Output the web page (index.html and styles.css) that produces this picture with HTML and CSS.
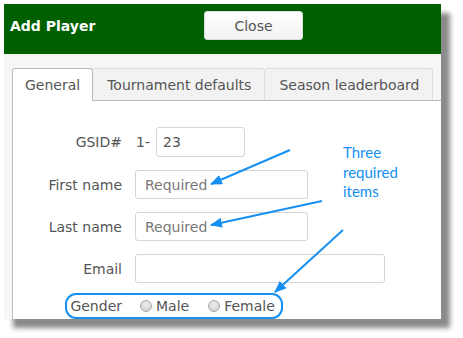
FILE: index.html
```html
<!DOCTYPE html>
<html lang="en">

    <head>
        <meta name="viewport" content="width=device-width, initial-scale=1">
        <title>Add Player</title>
        <link rel="stylesheet" href="styles.css">
    </head>

    <body>
        <div class="shot">
            <header class="bar">
                <h1>Add Player</h1>
                <button class="close" type="button">Close</button>
            </header>

            <main class="sheet">
                <nav class="tabs">
                    <a class="tab active">General</a>
                    <a class="tab">Tournament defaults</a>
                    <a class="tab">Season leaderboard</a>
                </nav>

                <form class="panel">
                    <label class="lbl" for="gsid">GSID#</label>
                    <div class="ctl">
                        <span class="prefix">1-</span>
                        <input id="gsid" class="field gsid" value="23">
                    </div>

                    <label class="lbl" for="first">First name</label>
                    <div class="ctl"><input id="first" class="field name" placeholder="Required"></div>

                    <label class="lbl" for="last">Last name</label>
                    <div class="ctl"><input id="last" class="field name" placeholder="Required"></div>

                    <label class="lbl" for="email">Email</label>
                    <div class="ctl"><input id="email" class="field email"></div>

                    <span class="lbl gender">Gender</span>
                    <div class="ctl radios">
                        <label class="opt"><input type="radio" name="gender">Male</label>
                        <label class="opt"><input type="radio" name="gender">Female</label>
                    </div>
                </form>
            </main>
        </div>

        <!-- annotations drawn over the screenshot -->
        <svg class="notes" width="463" height="338" viewBox="0 0 463 338" aria-hidden="true">
            <defs>
                <marker id="head" viewBox="0 0 12 10" refX="11" refY="5" markerWidth="12" markerHeight="10" markerUnits="userSpaceOnUse" orient="auto">
                    <path d="M0 0 L12 5 L0 10 Z" fill="#1590f2"/>
                </marker>
            </defs>
            <line x1="290" y1="150" x2="211" y2="184" marker-end="url(#head)"/>
            <line x1="322" y1="201" x2="211" y2="225" marker-end="url(#head)"/>
            <line x1="343" y1="230" x2="275" y2="292" marker-end="url(#head)"/>
            <rect x="66" y="294" width="216" height="24" rx="10" ry="10"/>
        </svg>
        <p class="callout">Three<br>required<br>items</p>
    </body>

</html>
```

FILE: styles.css
```css
html {
    font-family: "DejaVu Sans", Verdana, sans-serif;
    font-size: 14px;
}

body {
    margin: 0;
    background: #fff;
    position: relative;
    width: 463px;
    height: 338px;
    overflow: hidden;
}

.shot {
    margin: 4px 0 0 4px;
    width: 437px;
    height: 315px;
    overflow: hidden;
    box-shadow: 9px 9px 5px #8a8a8a;
    display: flex;
    flex-direction: column;
}

.bar {
    height: 50px;
    flex: none;
    background: #006000;
    display: flex;
    align-items: flex-start;
    box-sizing: border-box;
}

.bar h1 {
    margin: 0;
    width: 200px;
    padding: 14px 0 0 6px;
    font-size: 14px;
    font-weight: bold;
    color: #fff;
    box-sizing: border-box;
}

.close {
    margin-top: 7px;
    width: 99px;
    height: 29px;
    border: 1px solid #ddd;
    border-radius: 3px;
    background: linear-gradient(#fff, #f1f1f1);
    font: inherit;
    color: #555;
}

.sheet {
    flex: 1;
    background: #f6f6f6;
    padding: 14px 0 0 8px;
    display: flex;
    flex-direction: column;
    min-width: 0;
}

.tabs {
    display: flex;
    height: 32px;
    position: relative;
    z-index: 1;
}

.tab {
    padding: 8px 13px 0 14px;
    border: 1px solid #ddd;
    border-bottom: 0;
    border-left: 0;
    border-radius: 3px 3px 0 0;
    background: #f2f2f2;
    color: #555;
    white-space: nowrap;
    box-sizing: border-box;
    height: 32px;
}

.tab.active {
    padding: 8px 12px 0;
    background: #fff;
    border: 1px solid #b3bcc8;
    border-bottom: 0;
    height: 33px;
}

.panel {
    flex: 1;
    width: 600px;
    background: #fff;
    border-top: 1px solid #b3bcc8;
    border-left: 1px solid #b3bcc8;
    display: grid;
    grid-template-columns: 109px auto;
    grid-auto-rows: min-content;
    column-gap: 13px;
    row-gap: 13px;
    align-content: start;
    padding-top: 26px;
    box-sizing: border-box;
}

.lbl {
    text-align: right;
    color: #555;
    align-self: center;
    white-space: nowrap;
}

.ctl {
    display: flex;
    align-items: center;
}

.prefix {
    color: #555;
    width: 20px;
    margin-left: 1px;
}

.field {
    height: 29px;
    box-sizing: border-box;
    border: 1px solid #d6d6d6;
    border-radius: 3px;
    padding: 0 9px;
    font: inherit;
    color: #555;
    outline: none;
}

.field::placeholder {
    color: #777;
}

.gsid {
    width: 89px;
    height: 30px;
    padding-left: 6px;
}

.name {
    width: 173px;
}

.email {
    width: 250px;
}

.radios {
    height: 25px;
    margin-top: -3px;
    color: #555;
}

.gender {
    margin-top: -3px;
}

.opt {
    display: flex;
    align-items: center;
    gap: 4px;
    margin-left: 5px;
    margin-right: 19px;

    & input {
        appearance: none;
        margin: 0;
        width: 12px;
        height: 12px;
        border-radius: 50%;
        border: 1px solid #a8a8a8;
        background: radial-gradient(circle at 50% 35%, #eee, #ccc);
        box-sizing: border-box;
    }
}

.opt + .opt {
    margin-left: 0;
}

.notes {
    position: absolute;
    left: 0;
    top: 0;

    & line {
        stroke: #1590f2;
        stroke-width: 2;
    }

    & rect {
        fill: none;
        stroke: #1590f2;
        stroke-width: 2;
    }
}

.callout {
    position: absolute;
    left: 343px;
    top: 143px;
    margin: 0;
    font-family: Lato, "Open Sans", sans-serif;
    font-size: 15px;
    line-height: 19.5px;
    color: #1590f2;
}
```
